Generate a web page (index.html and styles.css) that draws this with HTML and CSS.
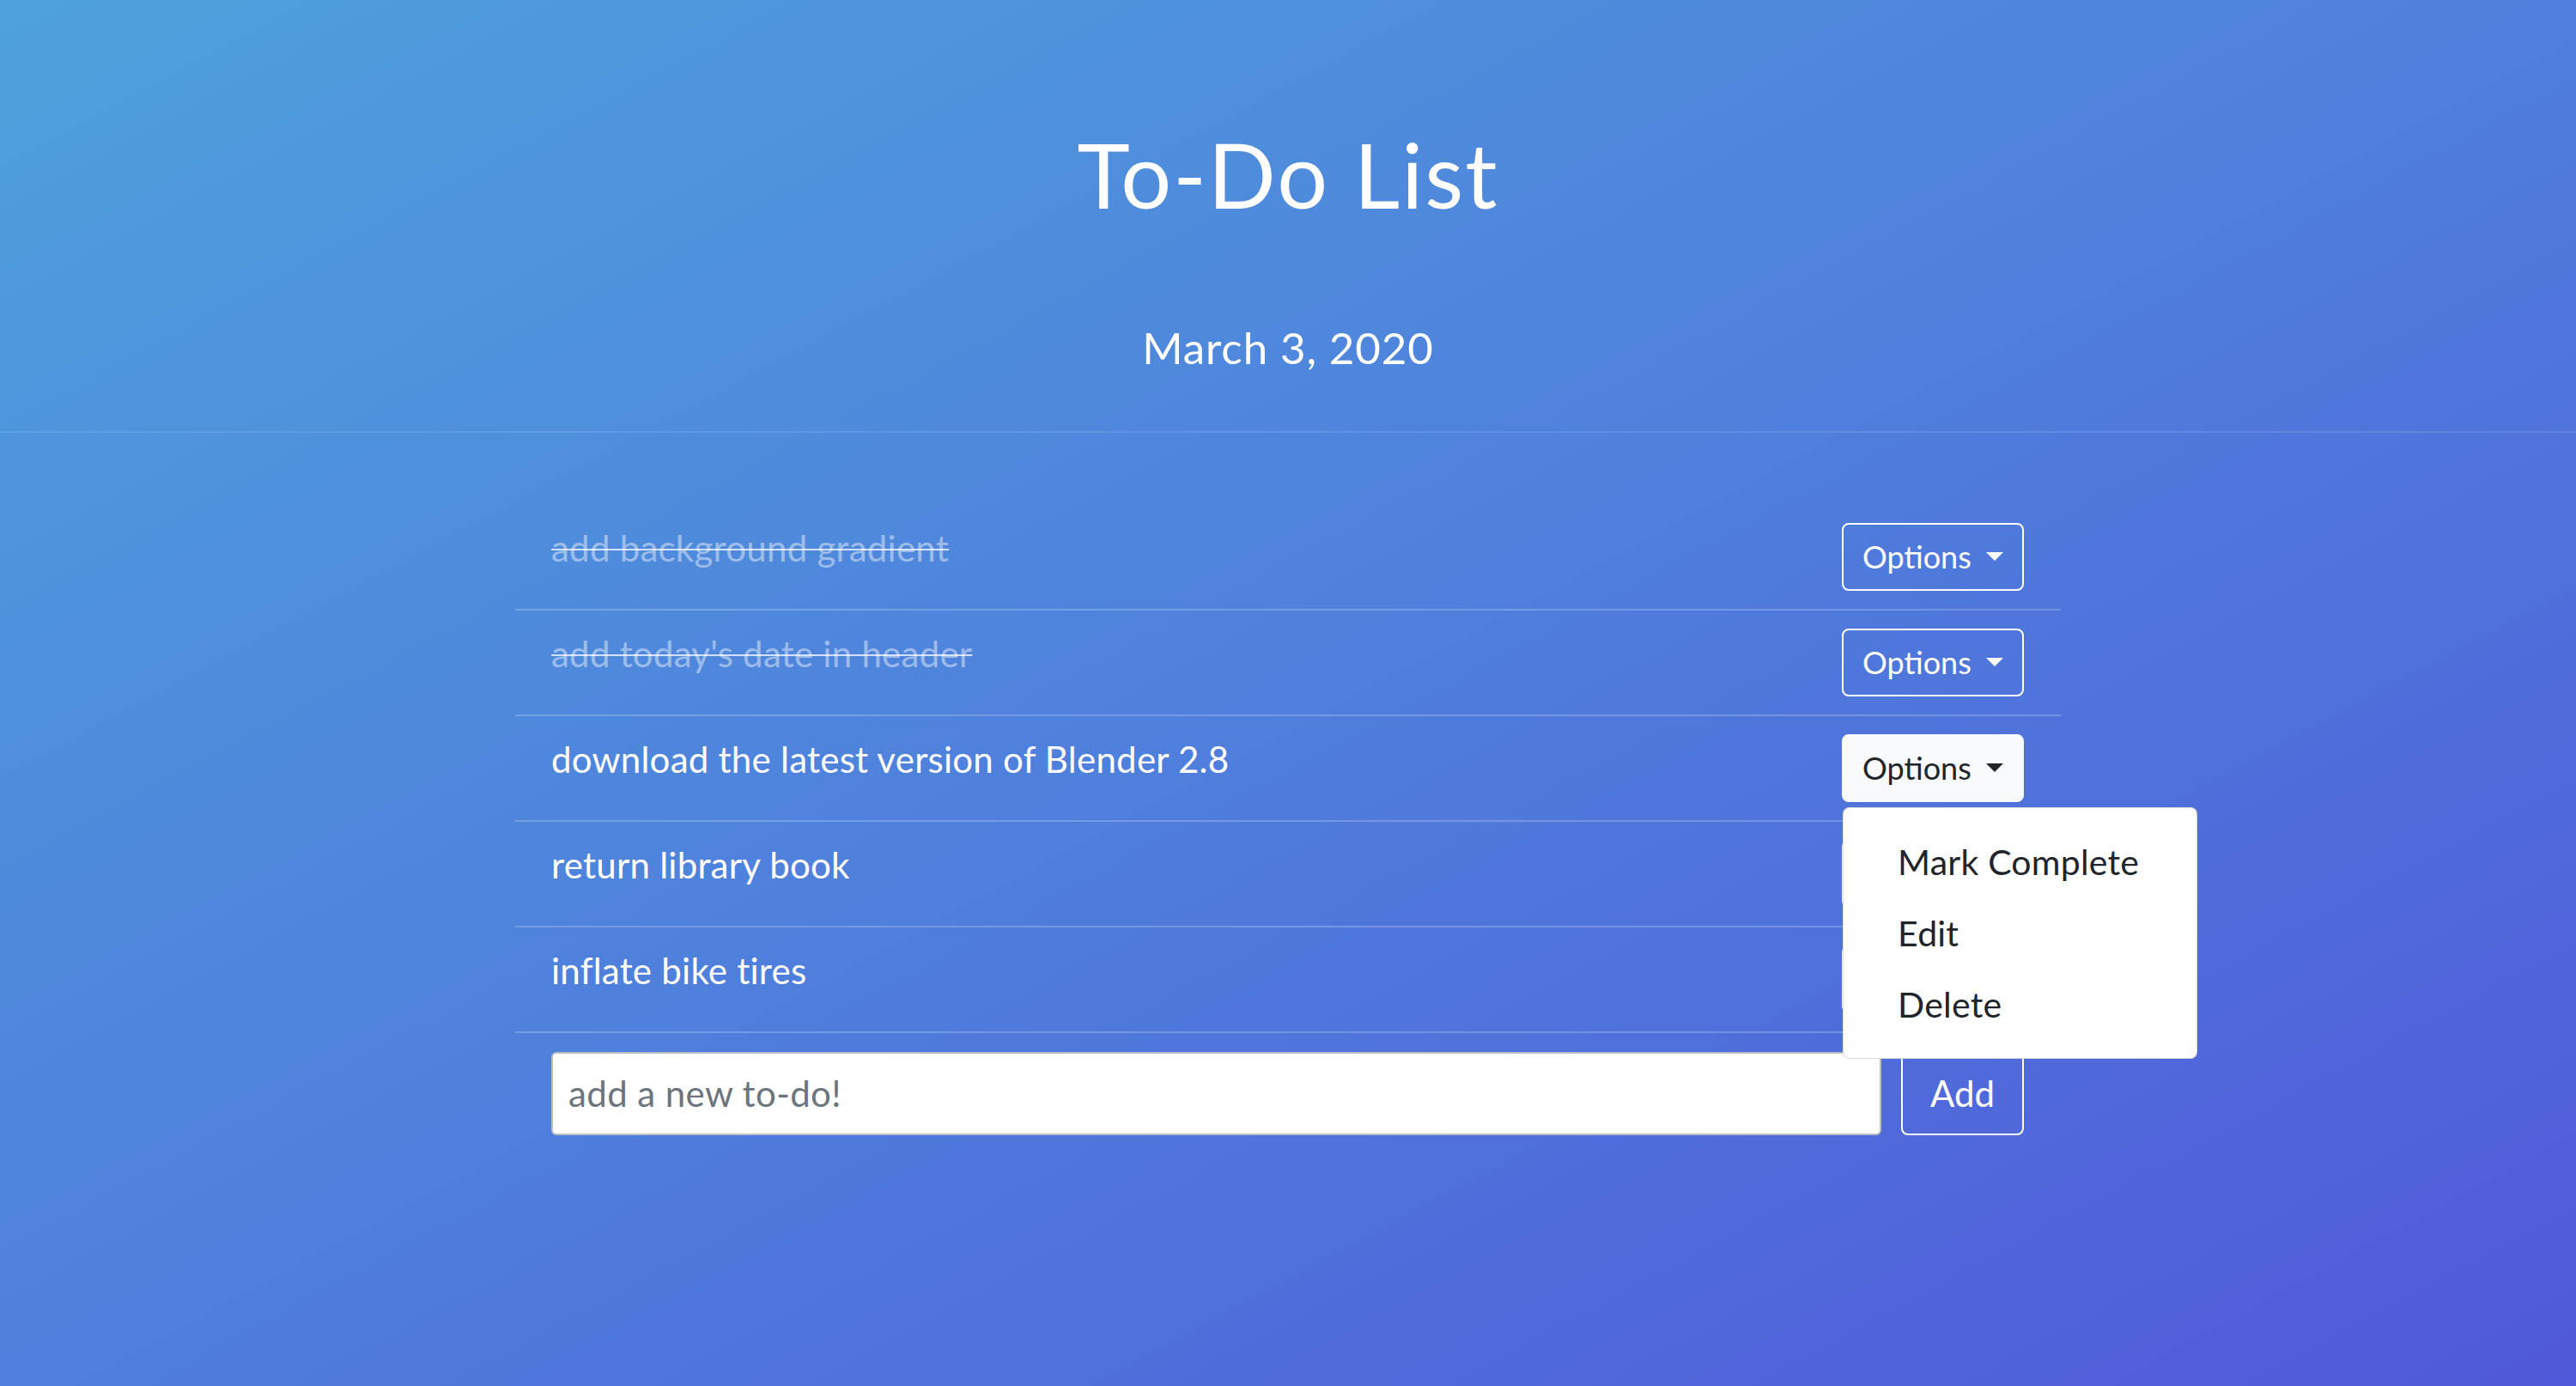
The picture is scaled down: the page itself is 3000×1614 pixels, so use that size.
FILE: index.html
```html
<!DOCTYPE html>
<html lang="en">
<head>
<meta charset="utf-8">
<title>To-Do List</title>
<link rel="stylesheet" href="styles.css">
</head>
<body>
<header class="header">
  <h1 class="title">To-Do List</h1>
  <p class="date">March 3, 2020</p>
</header>
<main class="todo">
  <ul class="todo-list">
    <li class="todo-item done">
      <span class="todo-text">add background gradient</span>
      <div class="dropdown"><button class="btn-options">Options <span class="caret"></span></button></div>
    </li>
    <li class="todo-item done">
      <span class="todo-text">add today's date in header</span>
      <div class="dropdown"><button class="btn-options">Options <span class="caret"></span></button></div>
    </li>
    <li class="todo-item">
      <span class="todo-text">download the latest version of Blender 2.8</span>
      <div class="dropdown open">
        <button class="btn-options active">Options <span class="caret"></span></button>
        <div class="dropdown-menu">
          <a class="dropdown-item">Mark Complete</a>
          <a class="dropdown-item">Edit</a>
          <a class="dropdown-item">Delete</a>
        </div>
      </div>
    </li>
    <li class="todo-item">
      <span class="todo-text">return library book</span>
      <div class="dropdown"><button class="btn-options">Options <span class="caret"></span></button></div>
    </li>
    <li class="todo-item">
      <span class="todo-text">inflate bike tires</span>
      <div class="dropdown"><button class="btn-options">Options <span class="caret"></span></button></div>
    </li>
  </ul>
  <form class="add-form">
    <input class="add-input" type="text" placeholder="add a new to-do!">
    <button class="btn-add" type="button">Add</button>
  </form>
</main>
</body>
</html>
```
FILE: styles.css
```css
html, body {
  margin: 0;
  padding: 0;
  height: 100%;
}

body {
  font-family: Lato, "Noto Sans", "Open Sans", sans-serif;
  color: #ffffff;
  background: linear-gradient(to bottom right, #4ea1dc 0%, #4f7fdc 50%, #5059d9 100%);
  min-height: 1614px;
  overflow: hidden;
}

.header {
  text-align: center;
  padding-top: 141px;
  padding-bottom: 67px;
  border-bottom: 2px solid rgba(255, 255, 255, 0.1);
}

.title {
  margin: 0;
  font-size: 104px;
  line-height: 1.2;
  font-weight: 400;
  letter-spacing: 2px;
}

.date {
  margin: 108px 0 0;
  font-size: 51px;
  line-height: 1.2;
  font-weight: 400;
  letter-spacing: 0.9px;
}

.todo {
  width: 1800px;
  margin: 84px auto 0;
}

.todo-list {
  list-style: none;
  margin: 0;
  padding: 0;
}

.todo-item {
  display: flex;
  justify-content: space-between;
  align-items: flex-start;
  padding: 21px 43px 21px 42px;
  border-bottom: 2px solid rgba(255, 255, 255, 0.22);
}

.todo-text {
  font-size: 42px;
  line-height: 58px;
  letter-spacing: 0.25px;
  color: #ffffff;
}

.done .todo-text {
  color: rgba(255, 255, 255, 0.45);
  text-decoration: line-through;
  text-decoration-color: rgba(255, 255, 255, 0.75);
  text-decoration-thickness: 2px;
}

.dropdown {
  position: relative;
}

.btn-options {
  display: block;
  box-sizing: border-box;
  height: 79px;
  padding: 0 22px;
  border: 2px solid #ffffff;
  border-radius: 8px;
  background: transparent;
  color: #ffffff;
  font-family: inherit;
  font-size: 36px;
  line-height: 75px;
  white-space: nowrap;
}

.btn-options.active {
  background: #f8f9fa;
  border-color: #f8f9fa;
  color: #212529;
}

.caret {
  display: inline-block;
  width: 0;
  height: 0;
  margin-left: 8px;
  vertical-align: 9px;
  border-top: 10px solid currentColor;
  border-left: 10px solid transparent;
  border-right: 10px solid transparent;
}

.dropdown-menu {
  position: absolute;
  top: 85px;
  left: 1px;
  z-index: 10;
  box-sizing: border-box;
  width: 413px;
  padding: 21px 0;
  background: #ffffff;
  border: 1px solid rgba(0, 0, 0, 0.15);
  border-radius: 8px;
}

.dropdown-item {
  display: block;
  padding: 14px 63px;
  font-size: 41px;
  line-height: 55px;
  letter-spacing: 0.2px;
  color: #212529;
  white-space: nowrap;
}

.add-form {
  display: flex;
  gap: 23px;
  margin: 0;
  padding: 22px 43px 0 42px;
}

.add-input {
  flex: 1;
  box-sizing: border-box;
  height: 97px;
  margin: 0;
  padding: 0 18px;
  border: 2px solid #b9bcc4;
  border-radius: 6px;
  background: #ffffff;
  font-family: inherit;
  font-size: 42px;
  letter-spacing: 0.4px;
  color: #495057;
  outline: none;
}

.add-input::placeholder {
  color: #6c757d;
}

.btn-add {
  box-sizing: border-box;
  width: 143px;
  height: 97px;
  border: 2px solid #ffffff;
  border-radius: 8px;
  background: transparent;
  color: #ffffff;
  font-family: inherit;
  font-size: 42px;
  padding: 0;
}
```
